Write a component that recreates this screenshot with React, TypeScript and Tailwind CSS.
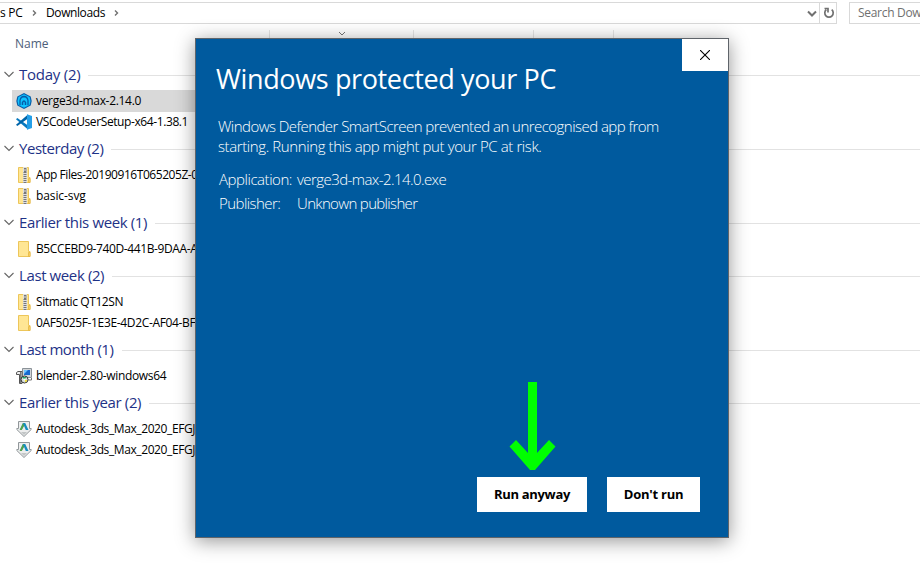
import { ReactNode } from "react";

const Zip = ({ zipped = true }: { zipped?: boolean }) => (
  <svg className="h-4 w-4 shrink-0" viewBox="0 0 16 16">
    <path d="M2.500.5h10v10H14v5H2.500z" fill="#ffe694" stroke="#edc65a" />
    <path d="M12.500 15.500v-4h1.500v4z" fill="#ffd96c" stroke="#e5b541" strokeWidth=".8" />
    {zipped && (
      <>
        <path d="M7 0h4v16H7z" fill="#dedede" />
        <path d="M8 1h2.400v4H8z" fill="#777" />
        <path d="M9 5v11" stroke="#777" strokeWidth="3" strokeDasharray="1 1" />
        <path d="M9 2v2" stroke="#fff" strokeWidth=".8" />
      </>
    )}
  </svg>
);

const Verge = () => (
  <svg className="h-4 w-4 shrink-0" viewBox="0 0 16 16">
    <path d="M8 0l6.700 3.400 1 4.600-1 4.600L8 16l-6.700-3.400L.3 8l1-4.600z" fill="#075da8" />
    <path d="M8 1.300l5.600 2.800.9 3.900-.9 3.900L8 14.700l-5.600-2.800L1.500 8l.9-3.900z" fill="#10c3ff" />
    <path d="M4 12.200V7.500Q4.500 3.700 8 3.500q3.500.2 4 4v4.700" fill="none" stroke="#075da8" strokeWidth="1.300" />
    <path d="M6.500 12V9.500Q8 6.500 9.500 9.500V12" fill="none" stroke="#075da8" strokeWidth="1.500" />
  </svg>
);

const Code = () => (
  <svg className="h-4 w-4 shrink-0" viewBox="0 0 16 16">
    <path d="M0 5.200 1.300 4 12 11.500v4z" fill="#0879bf" />
    <path d="M0 10.800 1.300 12 12 4.500v-4z" fill="#0065a9" />
    <path d="M11 .3 16 2v12l-5 1.700z" fill="#249fe8" />
  </svg>
);

const Installer = () => (
  <svg className="h-4 w-4 shrink-0" viewBox="0 0 16 16">
    <path d="M6.500.5h9v9h-9z" fill="#d2d5d8" stroke="#8b9298" />
    <path d="M8 2h6v5H8z" fill="#1769cf" />
    <path d="M8 2h4L8 6z" fill="#6fc5ff" />
    <path d="M10 12h5.500v-2" fill="none" stroke="#777" />
    <path d="M.5 4.500 2 3.500h4v12H3.500v-9H.5z" fill="#eee" stroke="#555" />
    <path d="M4.500 4v11" stroke="#777" />
    <circle cx="8.500" cy="11.500" r="3.500" fill="#d5ddda" stroke="#333" />
    <path d="M8.500 11.500 6 9h4.500z" fill="#1ba365" />
    <path d="m8.500 11.500 3 1-2 2z" fill="#f2dc26" />
    <circle cx="8.500" cy="11.500" r="1" fill="#fff" />
  </svg>
);

const Autodesk = () => (
  <svg className="h-4 w-4 shrink-0" viewBox="0 0 16 16">
    <path d="M2.500.5h11v7h1.700v1L8 15.500.8 8.500v-1h1.700z" fill="#eceded" stroke="#91979a" />
    <path d="M7 2h2.200L12.500 9H9.800L8 4.800 5.500 9H3.700z" fill="#168dc1" />
    <path d="M3.700 9 7 2l1 2.800L5.800 9z" fill="#54a348" />
    <path d="M5 11h6l-3 3z" fill="#c1c5c6" />
  </svg>
);

type Item = { name: string; icon: ReactNode; cls: string; selected?: boolean };
const groups: { title: string; cls: string; items: Item[] }[] = [
  { title: "Today (2)", cls: "tracking-[-0.25px]", items: [
    { name: "verge3d-max-2.14.0", icon: <Verge />, cls: "tracking-[-0.31px]", selected: true },
    { name: "VSCodeUserSetup-x64-1.38.1", icon: <Code />, cls: "tracking-[-0.4px]" },
  ] },
  { title: "Yesterday (2)", cls: "tracking-[-0.45px]", items: [
    { name: "App Files-20190916T065205Z-001", icon: <Zip />, cls: "tracking-[-0.45px]" },
    { name: "basic-svg", icon: <Zip />, cls: "tracking-[-0.1px]" },
  ] },
  { title: "Earlier this week (1)", cls: "tracking-[-0.37px]", items: [
    { name: "B5CCEBD9-740D-441B-9DAA-A", icon: <Zip zipped={false} />, cls: "tracking-[-0.39px]" },
  ] },
  { title: "Last week (2)", cls: "tracking-[-0.39px]", items: [
    { name: "Sitmatic QT12SN", icon: <Zip />, cls: "tracking-[-0.4px]" },
    { name: "0AF5025F-1E3E-4D2C-AF04-BF", icon: <Zip zipped={false} />, cls: "tracking-[-0.34px]" },
  ] },
  { title: "Last month (1)", cls: "tracking-[-0.43px]", items: [
    { name: "blender-2.80-windows64", icon: <Installer />, cls: "tracking-[-0.35px]" },
  ] },
  { title: "Earlier this year (2)", cls: "tracking-[-0.37px]", items: [
    { name: "Autodesk_3ds_Max_2020_EFGJ", icon: <Autodesk />, cls: "tracking-[-0.4px]" },
    { name: "Autodesk_3ds_Max_2020_EFGJ", icon: <Autodesk />, cls: "tracking-[-0.4px]" },
  ] },
];

const Crumb = () => (
  <svg className="h-2 w-[5px] shrink-0" viewBox="0 0 5 8"><path d="m1 1.500 2.500 2.500L1 6.500" fill="none" stroke="#707070" strokeWidth="1.400" /></svg>
);

export default function App() {
  return (
    <div className="relative flex h-[570px] w-[920px] flex-col overflow-hidden bg-white font-['Open_Sans','Noto_Sans',sans-serif] text-xs text-black">
      <header className="mt-0.5 flex h-[22px] shrink-0 gap-3 leading-5">
        <div className="flex w-[837px] items-center border-y border-r border-[#d9d9d9]">
          <span className="w-[23px] shrink-0 tracking-[-0.3px]">s PC</span>
          <span className="ml-[9px] flex"><Crumb /></span>
          <span className="ml-[9px] w-[59px] whitespace-nowrap tracking-[-0.4px]">Downloads</span>
          <span className="ml-[9px] flex"><Crumb /></span>
          <svg className="mr-[2px] ml-auto h-2 w-[10px]" viewBox="0 0 10 8"><path d="m1 2.500 4 4 4-4" fill="none" stroke="#707070" strokeWidth="2" /></svg>
          <div className="flex h-full w-[17px] items-center justify-center border-l border-[#d9d9d9]">
            <svg className="ml-px h-3 w-3" viewBox="0 0 12 12"><path d="M3.300 2.700A4.200 4.200 0 1 0 8.700 2.700M1.500 1.500H5V5.500" fill="none" stroke="#707070" strokeWidth="1.700" /></svg>
          </div>
        </div>
        <div className="flex flex-1 items-center overflow-hidden border-y border-l border-[#d9d9d9] pl-2 whitespace-nowrap tracking-[-0.3px] text-[#707070]">Search Dow</div>
      </header>
      <div className="flex h-[34px] shrink-0 items-start pt-1.5">
        <span className="w-[269px] pt-[5px] pl-[15px] leading-[18px] text-[#4c607a]">Name</span>
        <span className="flex h-6 w-[144px] justify-center border-l border-[#e5e5e5]">
          <svg className="mt-px h-[5px] w-2" viewBox="0 0 8 5"><path d="m1 1 3 3 3-3" fill="none" stroke="#777" /></svg>
        </span>
        <span className="h-6 w-[120px] border-l border-[#e5e5e5]" />
        <span className="h-6 w-[80px] border-l border-[#e5e5e5]" />
        <span className="h-6 w-5 border-l border-[#e5e5e5]" />
      </div>
      <main>
        {groups.map((group) => (
          <section key={group.title}>
            <div className="flex h-8 items-center pl-1">
              <svg className="mr-[5px] h-[7px] w-[10px] shrink-0" viewBox="0 0 10 7"><path d="m.5 1 4.500 4.500L9.500 1" fill="none" stroke="#666" strokeWidth="1.100" /></svg>
              <span className={`text-[15px] leading-5 whitespace-nowrap text-[#1e3287] ${group.cls}`}>{group.title}</span>
              <div className="mt-[3px] ml-2 h-px flex-1 bg-[#e2e2e2]" />
            </div>
            {group.items.map((item, i) => (
              <div key={i} className={`ml-3 flex w-[390px] items-center pl-1 ${item.selected ? "-mb-px h-[22px] bg-[#d9d9d9] pb-px" : "h-[21px]"}`}>
                {item.icon}
                <span className={`ml-1 leading-5 whitespace-nowrap ${item.cls}`}>{item.name}</span>
              </div>
            ))}
          </section>
        ))}
      </main>

      <div role="dialog" className="absolute top-[38px] left-[195px] flex h-[500px] w-[534px] flex-col border border-[#5f646a] bg-[#005a9e] text-white shadow-[0_3px_18px_rgba(0,0,0,0.42)]">
        <div className="flex h-[70px] shrink-0 justify-between">
          <h1 className="pt-5 pl-[20px] text-[27px] leading-10 whitespace-nowrap tracking-[-0.37px]">Windows protected your PC</h1>
          <button className="flex h-8 w-[46px] items-center justify-center bg-white">
            <svg className="h-[10px] w-[10px]" viewBox="0 0 10 10"><path d="m0 0 10 10m0-10L0 10" stroke="#000" strokeWidth="1.100" /></svg>
          </button>
        </div>
        <div className="pt-[7px] pl-[22px] text-[15px] leading-5 font-light whitespace-nowrap">
          <p className="tracking-[-0.54px]">Windows Defender SmartScreen prevented an unrecognised app from</p>
          <p className="tracking-[-0.4px]">starting. Running this app might put your PC at risk.</p>
          <div className="mt-[11px] flex h-6 items-center">
            <span className="w-[79px] pl-px tracking-[-0.45px]">Application:</span><span className="tracking-[-0.57px]">verge3d-max-2.14.0.exe</span>
          </div>
          <div className="flex h-6 items-center">
            <span className="w-[79px] pl-px tracking-[-0.55px]">Publisher:</span><span className="tracking-[-0.66px]">Unknown publisher</span>
          </div>
        </div>
        <svg className="mt-auto ml-[313px] h-[89px] w-12 shrink-0" viewBox="0 0 48 89"><path d="M19 1h9v71l12-13 6.500 6.500L26 89h-5L.5 65.500 7 59l12 13z" fill="#0f0" /></svg>
        <div className="mt-[7px] mb-[25px] ml-[281px] flex gap-5 text-[13px] font-bold text-black">
          <button className="h-[35px] w-[110px] bg-white pt-px tracking-[-0.32px]">Run anyway</button>
          <button className="h-[35px] w-[93px] bg-white pt-px tracking-[-0.25px]">Don't run</button>
        </div>
      </div>
    </div>
  );
}
